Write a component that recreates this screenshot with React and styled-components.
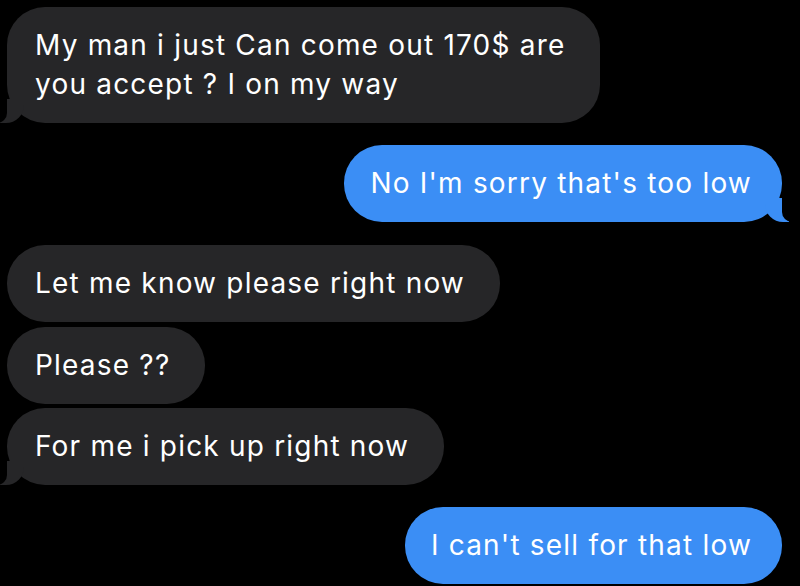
import React from 'react';
import styled, { createGlobalStyle, css } from 'styled-components';

const GlobalStyle = createGlobalStyle`
  html, body {
    margin: 0;
    padding: 0;
    background: #000;
  }
  * { box-sizing: border-box; }
`;

const Thread = styled.div`
  width: 800px;
  height: 586px;
  overflow: hidden;
  background: #000;
  display: flex;
  flex-direction: column;
  padding: 7px 18px 0 7px;
  font-family: Inter, "Liberation Sans", sans-serif;
`;

const Row = styled.div`
  display: flex;
  justify-content: ${(p) => (p.$mine ? 'flex-end' : 'flex-start')};
  margin-top: ${(p) => p.$gap}px;
`;

const Bubble = styled.div`
  position: relative;
  max-width: 620px;
  padding: ${(p) => (p.$mine ? '19px 30px 19px 26px' : '19px 35px 19px 28px')};
  border-radius: 38px;
  font-size: 28px;
  line-height: 39px;
  letter-spacing: 1.2px;
  white-space: pre-line;
  color: #fff;
  background: ${(p) => (p.$mine ? '#3b8ef5' : '#262628')};

  ${(p) => p.$tail && !p.$mine && css`
    &::before {
      content: '';
      position: absolute;
      bottom: 0;
      left: -7px;
      width: 24px;
      height: 24px;
      background: #262628;
      border-bottom-right-radius: 18px;
    }
    &::after {
      content: '';
      position: absolute;
      bottom: 0;
      left: -10px;
      width: 10px;
      height: 24px;
      background: #000;
      border-bottom-right-radius: 10px;
    }
  `}

  ${(p) => p.$tail && p.$mine && css`
    &::before {
      content: '';
      position: absolute;
      bottom: 0;
      right: -7px;
      width: 24px;
      height: 24px;
      background: #3b8ef5;
      border-bottom-left-radius: 18px;
    }
    &::after {
      content: '';
      position: absolute;
      bottom: 0;
      right: -10px;
      width: 10px;
      height: 24px;
      background: #000;
      border-bottom-left-radius: 10px;
    }
  `}
`;

const Text = styled.span`
  position: relative;
  z-index: 1;
`;

const messages = [
  { mine: false, gap: 0, tail: true, text: 'My man i just Can come out 170$ are\nyou accept ? I on my way' },
  { mine: true, gap: 22, tail: true, text: "No I'm sorry that's too low" },
  { mine: false, gap: 23, tail: false, text: 'Let me know please right now' },
  { mine: false, gap: 5, tail: false, text: 'Please ??' },
  { mine: false, gap: 4, tail: true, text: 'For me i pick up right now' },
  { mine: true, gap: 22, tail: false, text: "I can't sell for that low" },
];

const App = () => {
  return (
    <>
      <GlobalStyle />
      <Thread>
        {messages.map((m, i) => (
          <Row key={i} $mine={m.mine} $gap={m.gap}>
            <Bubble $mine={m.mine} $tail={m.tail}>
              <Text>{m.text}</Text>
            </Bubble>
          </Row>
        ))}
      </Thread>
    </>
  );
};

export default App;
